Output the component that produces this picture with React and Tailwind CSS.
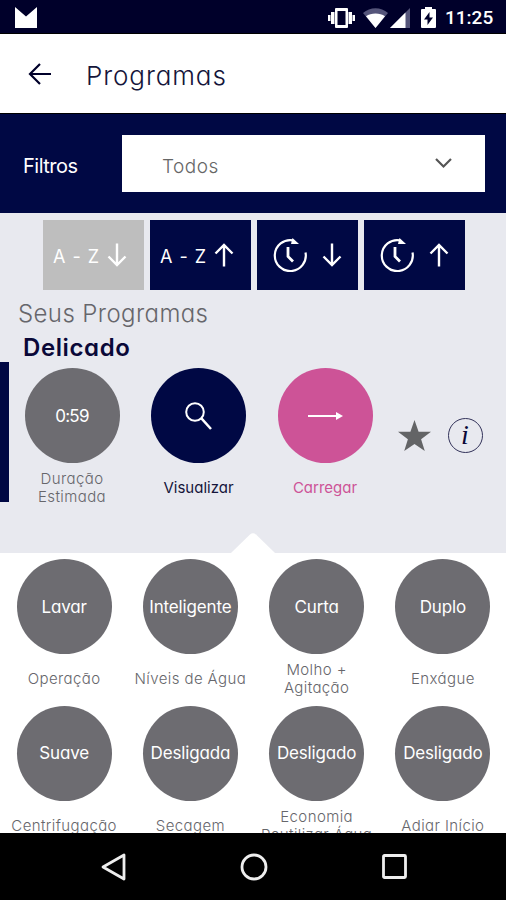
import React from 'react'

const selected = { name: 'Delicado', duration: '0:59' }

const options = [
  { value: 'Lavar', label: 'Operação' },
  { value: 'Inteligente', label: 'Níveis de Água' },
  { value: 'Curta', label: 'Molho +\nAgitação' },
  { value: 'Duplo', label: 'Enxágue' },
  { value: 'Suave', label: 'Centrifugação' },
  { value: 'Desligada', label: 'Secagem' },
  { value: 'Desligado', label: 'Economia\nReutilizar Água' },
  { value: 'Desligado', label: 'Adiar Início' },
]

const Arrow = ({ up }) => (
  <svg width="20" height="24" viewBox="0 0 20 24" fill="none" stroke="white" strokeWidth="2.4">
    {up ? <path d="M10 23.500V2M1.500 10.500L10 2l8.500 8.500" /> : <path d="M10 .5v21.500M1.500 13.500L10 22l8.500-8.500" />}
  </svg>
)

const ClockIcon = () => (
  <svg width="34" height="34" viewBox="0 0 34 34" fill="none" stroke="white" strokeWidth="2.200">
    <path d="M32.500 14.500A15.500 15.500 0 1 1 20 2.300" />
    <path d="M19.500 0l6.500 6h-8z" fill="white" stroke="none" />
    <path d="M15 9v9.500l5 5" strokeWidth="2.800" />
  </svg>
)

const StatusBar = () => (
  <div className="h-[34px] shrink-0 bg-[#00002a] border-b border-black flex items-center justify-between pt-[2px] pl-[15px] pr-[11px]">
    <svg width="22" height="21" viewBox="0 0 22 21" fill="white">
      <path d="M0 0l11 9.500L22 0v21H0z" />
    </svg>
    <div className="flex items-center">
      <svg width="27" height="20" viewBox="0 0 27 20" fill="white">
        <path fillRule="evenodd" d="M8 0h11a1 1 0 0 1 1 1v18a1 1 0 0 1-1 1H8a1 1 0 0 1-1-1V1a1 1 0 0 1 1-1zm1.500 3v14h8V3z" />
        <path d="M3 4h3.500v12H3zM0 7h2.500v6H0zM20.500 4H24v12h-3.500zM24.500 7H27v6h-2.500z" />
      </svg>
      <svg className="ml-[8px]" width="25" height="20" viewBox="0 0 25 20">
        <path d="M0 5C7-1.500 18-1.500 25 5L12.500 20z" fill="#55557a" />
        <path d="M3 8.300C8 4.500 17 4.500 22 8.300L12.500 20z" fill="white" />
      </svg>
      <svg className="ml-[2px]" width="20" height="20" viewBox="0 0 20 20">
        <path d="M20 0v20H0z" fill="#55557a" />
        <path d="M15.500 4.500V20H0z" fill="white" />
      </svg>
      <svg className="ml-[11px]" width="15" height="21" viewBox="0 0 15 21">
        <path d="M4 0h7v2h3a1 1 0 0 1 1 1v17a1 1 0 0 1-1 1H1a1 1 0 0 1-1-1V3a1 1 0 0 1 1-1h3z" fill="white" />
        <path d="M8.500 5L3 12.500h3.500V18L12 10.500H8.500z" fill="#00002a" />
      </svg>
      <span className="ml-[9px] w-[50px] text-[19px] leading-none font-medium font-['Roboto',sans-serif] text-white">11:25</span>
    </div>
  </div>
)

const Circle = ({ color, children }) => (
  <div className={`w-[95px] h-[95px] shrink-0 rounded-full flex items-center justify-center text-white text-[17px] tracking-[-0.15px] ${color}`}>
    {children}
  </div>
)

const App = () => {
  return (
    <div className="w-[506px] h-[900px] flex flex-col overflow-hidden bg-white font-['Inter',sans-serif] [font-feature-settings:'cv11']">
      <StatusBar />

      {/* Header */}
      <header className="h-[79px] shrink-0 flex items-center pl-[28px]">
        <svg width="24" height="22" viewBox="0 0 24 22" fill="none" stroke="#00002a" strokeWidth="2.200">
          <path d="M23 11H2.500M12 1L2 11l10 10" />
        </svg>
        <h1 className="ml-[34px] mt-[4px] text-[26px] leading-8 font-light text-[#15153a] tracking-[0.9px]">Programas</h1>
      </header>

      {/* Filter */}
      <div className="h-[100px] shrink-0 bg-[#000844] border-t border-black flex items-center pl-[23px]">
        <span className="w-[99px] pt-[5px] text-[20px] text-white tracking-[-0.5px]">Filtros</span>
        <div className="w-[363px] h-[57px] bg-white flex items-center justify-between pl-[40px] pr-[33px]">
          <span className="pt-[8px] text-[19px] font-light text-[#666] tracking-[0.5px]">Todos</span>
          <svg width="17" height="11" viewBox="0 0 17 11" fill="none" stroke="#555" strokeWidth="2.200">
            <path d="M1 1l7.500 7.500L16 1" />
          </svg>
        </div>
      </div>

      {/* Selected program */}
      <section className="h-[340px] shrink-0 bg-[#e8e9ef] flex flex-col">
        <div className="flex gap-[6px] pl-[43px] pt-[7px]">
          <button className="w-[101px] h-[70px] bg-[#bebebe] flex items-center pl-[10px] text-white">
            <span className="w-[54px] pt-[2px] text-left text-[18px] tracking-[1px] whitespace-nowrap">A - Z</span>
            <Arrow />
          </button>
          <button className="w-[101px] h-[70px] bg-[#000844] flex items-center pl-[10px] text-white">
            <span className="w-[54px] pt-[2px] text-left text-[18px] tracking-[1px] whitespace-nowrap">A - Z</span>
            <Arrow up />
          </button>
          <button className="w-[101px] h-[70px] bg-[#000844] flex items-center gap-[15px] pl-[16px]">
            <ClockIcon />
            <Arrow />
          </button>
          <button className="w-[101px] h-[70px] bg-[#000844] flex items-center gap-[15px] pl-[16px]">
            <ClockIcon />
            <Arrow up />
          </button>
        </div>
        <h2 className="h-[42px] pl-[18px] pt-[8px] text-[24px] leading-8 font-light text-[#66666b] tracking-[0.4px]">Seus Programas</h2>
        <h3 className="h-[30px] pl-[23px] text-[24px] leading-8 font-semibold text-[#0a0838] tracking-[0.6px]">{selected.name}</h3>

        <div className="flex">
          <div className="w-[8.5px] h-[140px] bg-[#000844]" />
          <div className="flex pt-[6px]">
            <div className="w-[127px] flex flex-col items-center">
              <Circle color="bg-[#6d6c71]">
                <span className="pt-[2px] tracking-[-0.8px]">{selected.duration}</span>
              </Circle>
              <p className="h-[48px] pt-[2px] flex items-center text-center text-[15px] leading-[18px] font-light text-[#66666b] tracking-[0.4px]">Duração<br />Estimada</p>
            </div>
            <div className="w-[126px] flex flex-col items-center">
              <Circle color="bg-[#000844]">
                <svg width="27" height="28" viewBox="0 0 27 28" fill="none" stroke="white" strokeWidth="2">
                  <circle cx="10" cy="10" r="8.800" />
                  <path d="M16.200 16.200L26 27" strokeWidth="2.500" />
                </svg>
              </Circle>
              <p className="h-[48px] pt-[2px] flex items-center text-[15px] text-[#15153a]">Visualizar</p>
            </div>
            <div className="w-[127px] flex flex-col items-center">
              <Circle color="bg-[#cd5397]">
                <svg width="35" height="10" viewBox="0 0 35 10" fill="white">
                  <path d="M0 4h28V1l7 4-7 4V6H0z" />
                </svg>
              </Circle>
              <p className="h-[48px] pt-[2px] flex items-center text-[15px] text-[#cd5397]">Carregar</p>
            </div>
          </div>
          <div className="flex items-center gap-[17px] h-[146px] pl-[9px]">
            <svg width="33" height="31" viewBox="0 0 33 31" fill="#636466">
              <path d="M16.500 0l4.100 11.700 12.400.100-9.900 7.400 3.700 11.800-10.300-7.100L6.200 31l3.700-11.800L0 11.800l12.400-.1z" />
            </svg>
            <div className="w-[35px] h-[35px] rounded-full border border-[#33335a] flex items-center justify-center font-['Liberation_Serif',serif] italic text-[28px] leading-none text-[#0a0838]">i</div>
          </div>
        </div>

        <svg className="mt-auto mx-auto" width="44" height="20" viewBox="0 0 44 20" fill="white">
          <path d="M0 20L19 1.500Q22-1 25 1.500L44 20z" />
        </svg>
      </section>

      {/* Program options */}
      <section className="h-[280px] shrink-0 overflow-hidden pt-[6px] pl-[1px] grid grid-cols-4 content-start">
        {options.map((option) => (
          <div key={option.label} className="h-[146.5px] flex flex-col items-center">
            <Circle color="bg-[#6d6c71]">
              <span className="pt-[2px]">{option.value}</span>
            </Circle>
            <p className="h-[48px] shrink-0 pt-[2px] flex items-center text-center text-[15px] leading-[18px] font-light text-[#66666b] tracking-[0.4px] whitespace-pre">
              {option.label}
            </p>
          </div>
        ))}
      </section>

      {/* Navigation bar */}
      <nav className="h-[67px] shrink-0 bg-black flex items-center pl-[101px]">
        <svg width="25" height="28" viewBox="0 0 25 28" fill="none" stroke="#eee" strokeWidth="2.800" strokeLinejoin="round">
          <path d="M23 2v24L2 14z" />
        </svg>
        <svg className="ml-[114px]" width="28" height="28" viewBox="0 0 28 28" fill="none" stroke="#eee" strokeWidth="2.800">
          <circle cx="14" cy="14" r="12" />
        </svg>
        <svg className="ml-[114px]" width="25" height="25" viewBox="0 0 25 25" fill="none" stroke="#eee" strokeWidth="2.800">
          <rect x="1.500" y="1.500" width="22" height="22" rx="1" />
        </svg>
      </nav>
    </div>
  )
}

export default App
